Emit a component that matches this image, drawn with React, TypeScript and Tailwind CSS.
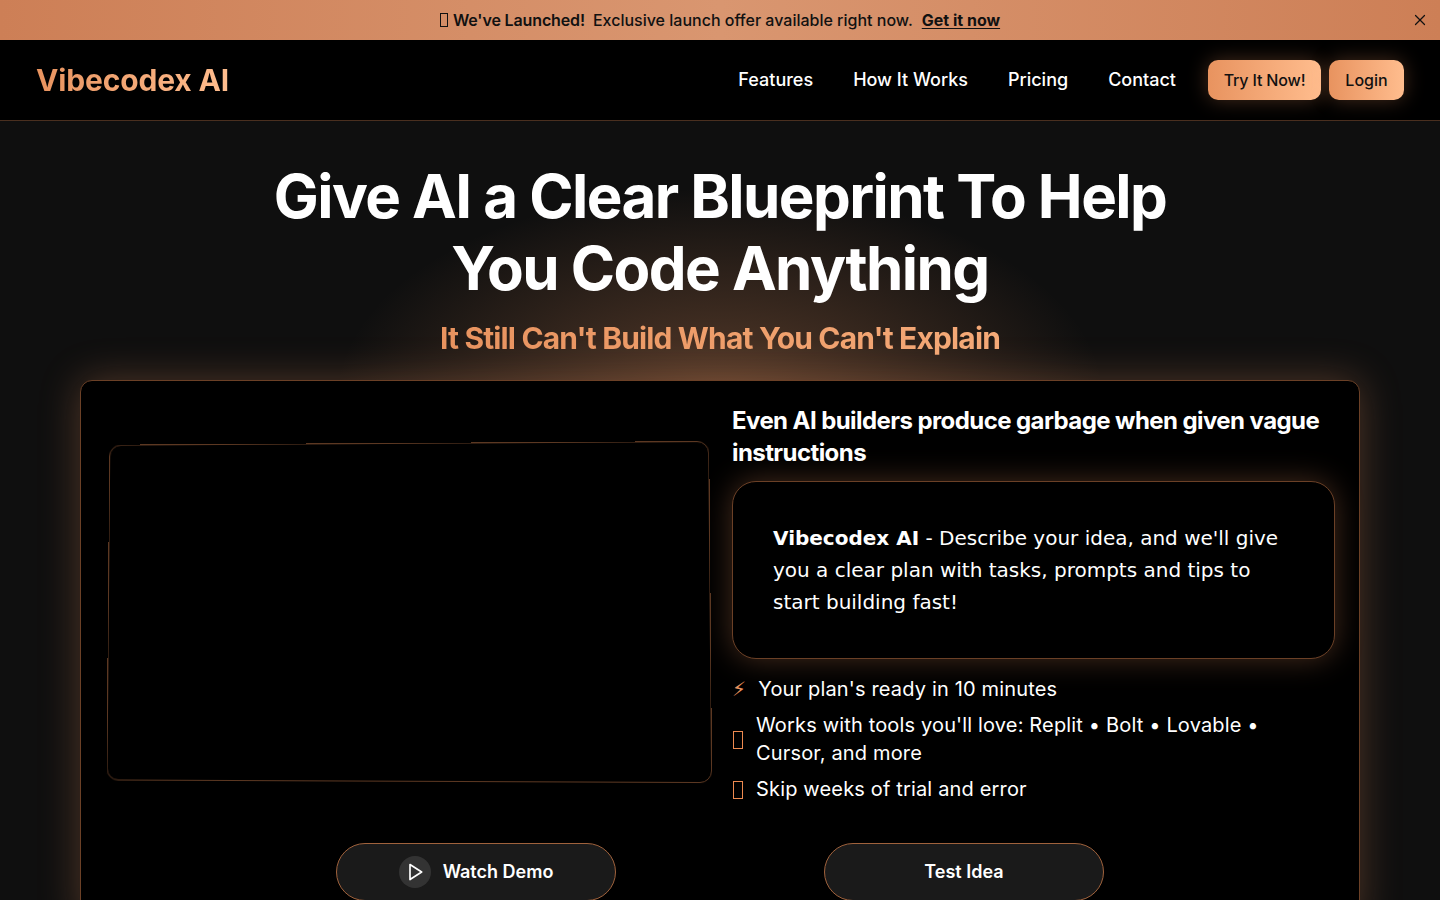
import { X } from "lucide-react";

const navLinks = ["Features", "How It Works", "Pricing", "Contact"];

const App = () => {
  return (
    <div className="h-screen overflow-hidden bg-[#0f0f0f] font-['Inter',sans-serif] text-white">
      {/* Launch banner */}
      <div className="relative flex h-10 items-center justify-center bg-gradient-to-r from-[#cd7f56] via-[#d99670] to-[#cd7f56] text-base text-[#111]">
        <span className="mr-[5px] h-[14px] w-2 border border-[#111]"></span>
        <span className="font-semibold tracking-[-0.13px]">We've Launched!</span>
        <span className="ml-2 font-medium">Exclusive launch offer available right now.</span>
        <a className="ml-[9px] font-bold underline underline-offset-2">Get it now</a>
        <X className="absolute right-[11px] h-[18px] w-[18px]" strokeWidth={1.6} />
      </div>

      {/* Nav */}
      <nav className="flex h-[81px] items-center justify-between border-b border-[#4a2f1f] bg-black px-9">
        <div className="bg-gradient-to-r from-[#e8935f] to-[#ffbd8e] bg-clip-text text-3xl font-bold tracking-[-0.005em] text-transparent">
          Vibecodex AI
        </div>
        <div className="flex items-center">
          <div className="flex items-center gap-10">
            {navLinks.map((link) => (
              <a key={link} className="text-lg font-medium">
                {link}
              </a>
            ))}
          </div>
          <div className="ml-8 flex gap-2 text-[#111]">
            <button className="h-10 w-[113px] rounded-[10px] bg-gradient-to-r from-[#e8935f] to-[#ffbd8e] text-base font-medium tracking-[-0.15px] shadow-[0_0_20px_rgba(232,147,95,0.3)]">
              Try It Now!
            </button>
            <button className="h-10 w-[75px] rounded-[10px] bg-gradient-to-r from-[#e8935f] to-[#ffbd8e] text-base font-medium shadow-[0_0_20px_rgba(232,147,95,0.3)]">
              Login
            </button>
          </div>
        </div>
      </nav>

      {/* Hero */}
      <section className="relative flex flex-col items-center pt-[39px]">
        <div className="absolute left-1/2 top-[59px] h-[440px] w-[800px] -translate-x-1/2 bg-[radial-gradient(ellipse_at_center,rgba(232,147,95,0.34),transparent_68%)]"></div>
        <h1 className="relative text-center text-6xl leading-[72px] font-bold tracking-[-0.026em]">
          Give AI a Clear Blueprint To Help
          <br />
          You Code Anything
        </h1>
        <h2 className="relative mt-4 bg-gradient-to-r from-[#e8935f] to-[#f5aa78] bg-clip-text text-3xl font-bold tracking-[-0.0285em] text-transparent">
          It Still Can't Build What You Can't Explain
        </h2>

        {/* Main card */}
        <div className="relative mt-6 w-[1280px] rounded-xl border border-[#6b4026] bg-black p-6 shadow-[0_0_40px_rgba(232,147,95,0.3)]">
          <div className="grid grid-cols-2 gap-6">
            <div className="flex items-center pt-4">
              <div className="aspect-video w-full shrink-0 rounded-xl border border-[#5c3822] bg-black [transform:perspective(1000px)_rotateX(1.65deg)_rotateY(-1.76deg)]"></div>
            </div>
            <div>
              <h3 className="text-2xl font-bold tracking-[-0.024em]">
                Even AI builders produce garbage when given vague instructions
              </h3>
              <div className="mt-3 rounded-3xl border border-[#6b4026] bg-black p-10 font-['DejaVu_Sans',sans-serif] text-xl leading-8 shadow-[0_0_30px_rgba(232,147,95,0.3)]">
                <b className="font-bold">Vibecodex AI</b> - Describe your idea, and we'll give you a clear plan with tasks, prompts and tips to start building fast!
              </div>
              <ul className="mt-4 flex flex-col gap-2 text-xl leading-7 tracking-[0.008em]">
                <li className="flex items-center gap-3">
                  <span className="font-['DejaVu_Sans',sans-serif] text-[#e8935f]">{"\u26A1\uFE0E"}</span>
                  <span>Your plan's ready in 10 minutes</span>
                </li>
                <li className="flex items-center gap-[13px]">
                  <span className="ml-px mt-[2px] h-[18px] w-[10px] shrink-0 border border-[#ed8a50]"></span>
                  <span className="pr-4">Works with tools you'll love: Replit • Bolt • Lovable • Cursor, and more</span>
                </li>
                <li className="flex items-center gap-[13px]">
                  <span className="ml-px mt-[2px] h-[18px] w-[10px] shrink-0 border border-[#ed8a50]"></span>
                  <span>Skip weeks of trial and error</span>
                </li>
              </ul>
            </div>
          </div>

          <div className="mt-10 flex justify-center gap-[208px]">
            <button className="flex h-[58px] w-[280px] items-center justify-center gap-3 rounded-full border border-[#a0623c] bg-[#1a1a1a] text-lg font-semibold">
              <span className="flex h-8 w-8 items-center justify-center rounded-full bg-[#333]">
                <svg viewBox="0 0 24 24" className="h-5 w-5" fill="none" stroke="white" strokeWidth="2" strokeLinejoin="round">
                  <path d="M6 3l14 9-14 9z" />
                </svg>
              </span>
              Watch Demo
            </button>
            <button className="h-[58px] w-[280px] rounded-full border border-[#a0623c] bg-[#1a1a1a] text-lg font-semibold">
              Test Idea
            </button>
          </div>
        </div>
      </section>
    </div>
  );
};

export default App;
